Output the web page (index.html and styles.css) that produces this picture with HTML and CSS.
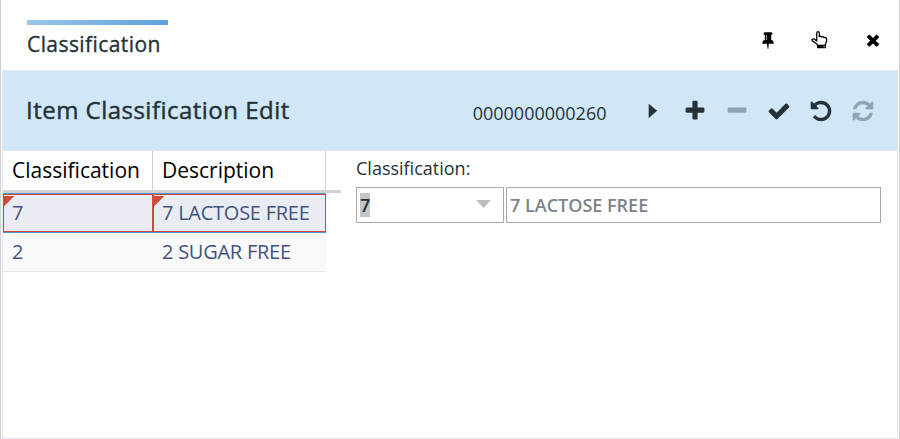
FILE: index.html
```
<!DOCTYPE html>
<html lang="en">
<head>
<meta charset="utf-8">
<title>Item Classification Edit</title>
<link rel="stylesheet" href="styles.css">
</head>
<body>
<div class="window">
  <header class="tabbar">
    <div class="tab">Classification</div>
    <div class="window-tools">
      <svg class="icon-sm" viewBox="0 0 1792 1792"><path d="M800 864v-448q0-14-9-23t-23-9-23 9-9 23v448q0 14 9 23t23 9 23-9 9-23zm672 352q0 26-19 45t-45 19h-429l-51 483q-2 12-10.5 20.5t-20.5 8.5h-1q-27 0-32-27l-76-485h-404q-26 0-45-19t-19-45q0-123 78.5-221.5t177.5-98.5v-512q-52 0-90-38t-38-90 38-90 90-38h640q52 0 90 38t38 90-38 90-90 38v512q99 0 177.5 98.5t78.5 221.5z"/></svg>
      <svg class="icon-sm" viewBox="0 0 18 18"><path class="hand" d="M5.7 9.8V2.3Q5.8 .7 7 .7T8.300 2.300V5.500Q9.700 4.900 10.800 5.900Q12.200 5.300 13.200 6.500Q15.700 6.200 15.700 8.700Q15.700 10.500 14.700 12.300L14.300 14.500H6.700Q6.300 12.900 4.300 11.700L1.400 10Q.7 9.300 1.200 8.400Q2 7.500 3.500 8.200Z"/><path d="M6 14h9v2.600q0 .7-.8 .7H6.800q-.8 0-.8-.7z"/><path class="dot" d="M12.500 15.200h1.300v1h-1.300z"/></svg>
      <svg class="icon-sm" viewBox="0 0 1792 1792"><path d="M1490 1322q0 40-28 68l-136 136q-28 28-68 28t-68-28l-294-294-294 294q-28 28-68 28t-68-28l-136-136q-28-28-28-68t28-68l294-294-294-294q-28-28-28-68t28-68l136-136q28-28 68-28t68 28l294 294 294-294q28-28 68-28t68 28l136 136q28 28 28 68t-28 68l-294 294 294 294q28 28 28 68z"/></svg>
    </div>
  </header>
  <main class="panel">
    <div class="toolbar">
      <h1 class="title">Item Classification Edit</h1>
      <span class="item-number">0000000000260</span>
      <div class="actions">
        <svg class="icon" viewBox="0 0 24 24"><path d="M7.700 4.800v14.200L16.200 11.800z"/></svg>
        <svg class="icon" viewBox="0 0 1792 1792"><path d="M1600 736v192q0 40-28 68t-68 28h-416v416q0 40-28 68t-68 28h-192q-40 0-68-28t-28-68v-416h-416q-40 0-68-28t-28-68v-192q0-40 28-68t68-28h416v-416q0-40 28-68t68-28h192q40 0 68 28t28 68v416h416q40 0 68 28t28 68z"/></svg>
        <svg class="icon disabled" viewBox="0 0 1792 1792"><path d="M1600 736v192q0 40-28 68t-68 28h-1216q-40 0-68-28t-28-68v-192q0-40 28-68t68-28h1216q40 0 68 28t28 68z"/></svg>
        <svg class="icon" viewBox="0 0 1792 1792"><path d="M1671 566q0 40-28 68l-724 724-136 136q-28 28-68 28t-68-28l-136-136-362-362q-28-28-28-68t28-68l136-136q28-28 68-28t68 28l294 295 656-657q28-28 68-28t68 28l136 136q28 28 28 68z"/></svg>
        <svg class="icon" viewBox="0 0 1792 1792"><path d="M1664 896q0 156-61 298t-164 245-245 164-298 61q-172 0-327-72.5t-264-204.5q-7-10-6.500-22.500t8.500-20.500l137-138q10-9 25-9 16 2 23 12 73 95 179 147t225 52q104 0 198.500-40.500t163.500-109.500 109.500-163.500 40.500-198.500-40.500-198.500-109.500-163.500-163.500-109.500-198.500-40.500q-98 0-188 35.500t-160 101.500l137 138q31 30 14 69-17 40-59 40h-448q-26 0-45-19t-19-45v-448q0-42 40-59 39-17 69 14l130 129q107-101 244.500-156.500t284.500-55.500q156 0 298 61t245 164 164 245 61 298z"/></svg>
        <svg class="icon disabled" viewBox="0 0 1792 1792"><path d="M1639 1056q0 5-1 7-64 268-268 434.500t-478 166.500q-146 0-282.500-55t-243.500-157l-129 129q-19 19-45 19t-45-19-19-45v-448q0-26 19-45t45-19h448q26 0 45 19t19 45-19 45l-137 137q71 66 161 102t187 36q134 0 250-65t186-179q11-17 53-117 8-23 30-23h192q13 0 22.500 9.500t9.500 22.500zm25-800v448q0 26-19 45t-45 19h-448q-26 0-45-19t-19-45 19-45l138-138q-148-137-349-137-134 0-250 65t-186 179q-11 17-53 117-8 23-30 23h-199q-13 0-22.500-9.500t-9.500-22.500v-7q65-268 270-434.500t480-166.500q146 0 284 55.500t245 156.500l130-129q19-19 45-19t45 19 19 45z"/></svg>
      </div>
    </div>
    <div class="content">
      <section class="grid">
        <div class="grid-head"><div class="cell">Classification</div><div class="cell">Description</div></div>
        <div class="row selected"><div class="cell">7</div><div class="cell">7 LACTOSE FREE</div></div>
        <div class="row"><div class="cell">2</div><div class="cell">2 SUGAR FREE</div></div>
      </section>
      <section class="form">
        <div class="label">Classification:</div>
        <div class="fields">
          <div class="combo"><span class="highlight">7</span><svg class="arrow" viewBox="0 0 15 8"><path d="M0 0h15L7.500 8z"/></svg></div>
          <div class="readonly">7 LACTOSE FREE</div>
        </div>
      </section>
    </div>
  </main>
</div>
</body>
</html>
```
FILE: styles.css
```
* { box-sizing: border-box; }
body {
  margin: 0;
  font-family: "Open Sans", sans-serif;
  color: #263238;
  background: #fff;
}
.window {
  height: 439px;
  display: flex;
  flex-direction: column;
  padding: 0 1px;
  border-left: 1px solid #d2d0d4;
  border-right: 1px solid #d2d0d4;
}
.tabbar {
  height: 70px;
  display: flex;
  justify-content: space-between;
  align-items: flex-start;
  padding: 20px 16.500px 0 25px;
}
.tab {
  width: 141px;
  height: 40px;
  padding-top: 10px;
  font-size: 21px;
  line-height: 28px;
  letter-spacing: .42px;
  -webkit-text-stroke: .35px #263238;
  white-space: nowrap;
  background: linear-gradient(90deg, #9bc6ea, #5da1dc) top / 100% 5px no-repeat;
}
.window-tools { display: flex; gap: 34.500px; padding-top: 11px; }
.icon-sm { width: 18px; height: 18px; display: block; }
.hand { fill: #fff; stroke: #000; stroke-width: 1.3; }
.dot { fill: #fff; }
.panel {
  flex: 1;
  display: flex;
  flex-direction: column;
  border: 1px solid #e7e8ef;
}
.toolbar {
  height: 79px;
  display: flex;
  align-items: center;
  background: #d0e7f7;
  padding: 0 22.500px 0 23px;
}
.title {
  flex: 1;
  margin: -2px 0 0;
  font-size: 24px;
  font-weight: 400;
  line-height: 34px;
  letter-spacing: .48px;
  -webkit-text-stroke: .45px #263238;
  white-space: nowrap;
}
.item-number { font-size: 18px; line-height: 24px; padding-top: 5px; margin-right: 34px; }
.actions { display: flex; gap: 18px; }
.icon { width: 24px; height: 24px; display: block; fill: #263238; }
.disabled { fill: #93a4b1; }
.content {
  flex: 1;
  display: flex;
  border-top: 1px solid #e7e8ef;
}
.grid { width: 338px; font-size: 20px; line-height: 28px; }
.grid-head {
  display: flex;
  height: 42px;
  color: #000;
  font-size: 21px;
  border-bottom: 3px solid #d2d0d4;
}
.cell { width: 173px; padding: 5px 9px; white-space: nowrap; }
.cell:first-child { width: 150px; }
.grid-head .cell { border-right: 1px solid #d2d0d4; }
.row {
  display: flex;
  width: 323px;
  height: 39px;
  color: #43547f;
  letter-spacing: -.25px;
  background: #f9f9f9;
  border-bottom: 1px solid #e7e8ef;
}
.selected {
  height: 40px;
  background: #e9edf3;
  border-top: 1px solid #4997d0;
  border-bottom: 1px solid #4997d0;
}
.selected .cell {
  border: 1px solid #d04a37;
  padding: 4px 8px;
  background: linear-gradient(135deg, #d04a37 7px, transparent 7.500px) 0 1px / 11px 11px no-repeat;
}
.form { flex: 1; padding: 3px 16px 0 15px; }
.label { font-size: 18px; line-height: 28px; }
.fields { display: flex; gap: 2px; margin-top: 5px; }
.combo, .readonly {
  height: 36px;
  border: 1px solid #a9a9a9;
  font-size: 18px;
  line-height: 24px;
  display: flex;
  align-items: center;
}
.combo { width: 148px; justify-content: space-between; padding: 0 12px 0 3px; font-weight: 600; }
.highlight { background: #c5c5c5; }
.arrow { width: 15px; height: 8px; margin-top: -2px; fill: #bdbdbd; }
.readonly { flex: 1; padding-left: 3px; color: #7c8388; font-weight: 600; }
```
